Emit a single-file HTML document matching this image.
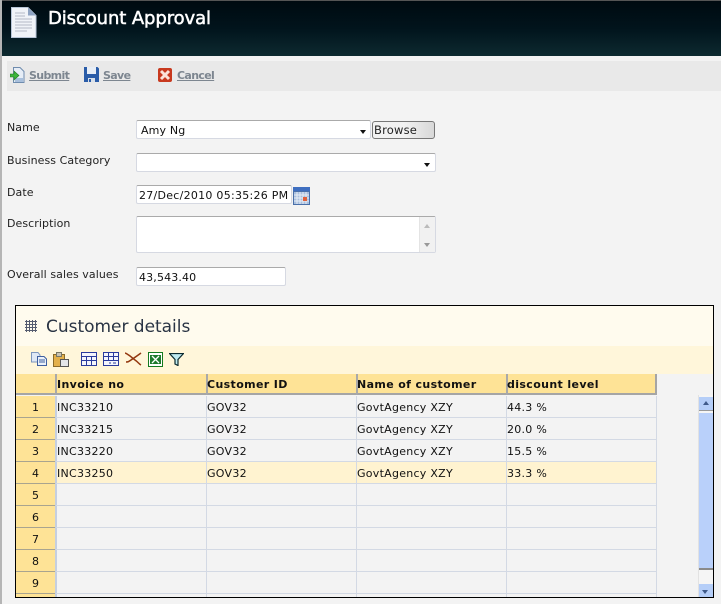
<!DOCTYPE html>
<html><head><meta charset="utf-8"><style>
*{box-sizing:border-box}
html,body{margin:0;padding:0}
body{width:721px;height:604px;overflow:hidden;background:#f3f3f3;position:relative;font-family:"DejaVu Sans","Liberation Sans",sans-serif;font-size:11px;color:#111}
.a{position:absolute;white-space:nowrap}
.l{left:7px;color:#222;font-size:11px;line-height:14px;letter-spacing:.07px;margin-top:1px}
.f{position:absolute;background:#fff;border:1px solid #d6d9e2;border-top-color:#aaa;border-radius:2px;line-height:19px;padding-left:4px;font-size:11px;white-space:nowrap}
.tb{font-weight:bold;color:#7d8690;text-decoration:underline;font-size:11px;line-height:14px;top:69px;letter-spacing:-.65px}
.r{width:39px;height:22px;background:#fee396;border-bottom:1px solid #a9a48f;text-align:center;line-height:23px;color:#111}
.h{top:374px;height:21px;background:#fee396;border-left:2px solid #a9a9a9;border-bottom:2px solid #a5a5a5;font-weight:bold;line-height:21px;padding-left:0;color:#111;font-size:11px;letter-spacing:.37px;text-indent:-1px}
.c{line-height:23px;padding-left:2px;letter-spacing:.27px}
.hl{height:1px;background:#d3d9e4;left:56px;width:601px}
.vl{width:1px;background:#d3d9e4;top:396px;height:201px}
</style></head><body>
<div class="a" style="left:0;top:0;width:2px;height:604px;background:#b5b5b5"></div>
<div class="a" style="left:2px;top:0;width:719px;height:56px;background:linear-gradient(#000a10 0,#01141c 50%,#0d2a30 100%);border-top:1px solid #555"></div>
<svg class="a" style="left:11px;top:7px" width="26" height="31" viewBox="0 0 26 31"><path d="M.5.5H17L25 8.500V30.500H.5Z" fill="#f0f3f8" stroke="#b9c6d8"/><path d="M17 .5V8.500H25Z" fill="#8ea3c2"/><path d="M4 6h10M4 9h10M4 12h17M4 15h17M4 18h17M4 21h17M4 24h12" stroke="#b4bac6"/></svg>
<div class="a" style="left:48px;top:7px;font-size:18px;line-height:24px;color:#fff;font-family:'DejaVu Sans',sans-serif;-webkit-text-stroke:.5px #fff;letter-spacing:-.1px">Discount Approval</div>

<div class="a" style="left:7px;top:61px;width:714px;height:30px;background:#e9e9e9"></div>
<svg class="a" style="left:10px;top:67px" width="15" height="16" viewBox="0 0 15 16"><path d="M3.500.5H10L14 4.500V15.500H3.500Z" fill="#e6edf6" stroke="#6f8cae"/><path d="M5 11h8v4H5z" fill="#a9c0dc"/><path d="M0 7H4V4L9 8.500 4 13V10H0Z" fill="#3cb43c" stroke="#1c7a1c" stroke-width=".6"/></svg>
<div class="a tb" style="left:29px">Submit</div>
<svg class="a" style="left:84px;top:67px" width="15" height="15" viewBox="0 0 15 15"><path d="M0 0H13.500L15 1.500V15H0Z" fill="#2a5ca8"/><path d="M3 0H12V7H3Z" fill="#e8eef6"/><path d="M4 11H11V15H4Z" fill="#d8e0ea"/><path d="M5 12h2v3H5z" fill="#2a5ca8"/></svg>
<div class="a tb" style="left:103px">Save</div>
<svg class="a" style="left:158px;top:68px" width="14" height="14" viewBox="0 0 14 14"><rect width="14" height="14" rx="2" fill="#c8391e"/><path d="M3 3L11 11M11 3L3 11" stroke="#fbe3d8" stroke-width="3"/></svg>
<div class="a tb" style="left:177px">Cancel</div>

<div class="a l" style="top:120px">Name</div>
<div class="a l" style="top:153px">Business Category</div>
<div class="a l" style="top:185px">Date</div>
<div class="a l" style="top:216px">Description</div>
<div class="a l" style="top:267px">Overall sales values</div>

<div class="f" style="left:136px;top:120px;width:235px;height:19px;letter-spacing:.15px">Amy Ng</div>
<div class="a" style="left:360px;top:130px;width:0;height:0;border:3.500px solid transparent;border-top:4px solid #111;border-bottom:0"></div>
<div class="a" style="left:372px;top:121px;width:63px;height:18px;border:1px solid #777;border-radius:3px;background:linear-gradient(90deg,#f2f2f2 50%,#d8d8d8);line-height:17px;padding-left:1px;font-size:11.500px;letter-spacing:.2px;color:#222">Browse</div>
<div class="f" style="left:136px;top:153px;width:300px;height:19px"></div>
<div class="a" style="left:424px;top:163px;width:0;height:0;border:3.500px solid transparent;border-top:4px solid #111;border-bottom:0"></div>
<div class="f" style="left:136px;top:185px;width:156px;height:19px;padding-left:2px;line-height:19px;letter-spacing:.27px">27/Dec/2010 05:35:26 PM</div>
<svg class="a" style="left:293px;top:187px" width="17" height="18" viewBox="0 0 17 18"><rect width="17" height="18" fill="#4a70aa"/><rect y="0" width="17" height="4" fill="#3f6fc0"/><path d="M1 5h15v12H1z" fill="#a9bfdd"/><path d="M1 8h15M1 11h15M1 14h15M4 5v12M7 5v12M10 5v12M13 5v12" stroke="#e6edf6"/><rect x="10" y="10" width="4" height="4" fill="#e0603c"/></svg>
<div class="f" style="left:136px;top:216px;width:300px;height:37px"></div>
<div class="a" style="left:419px;top:217px;width:16px;height:35px;background:#f1f1f1;border-left:1px solid #e4e4e4"></div>
<div class="a" style="left:424px;top:224px;width:0;height:0;border:3.500px solid transparent;border-bottom:4px solid #bbb;border-top:0"></div>
<div class="a" style="left:424px;top:243px;width:0;height:0;border:3.500px solid transparent;border-top:4px solid #999;border-bottom:0"></div>
<div class="f" style="left:136px;top:267px;width:150px;height:19px;padding-left:2px;letter-spacing:.15px">43,543.40</div>

<!-- panel -->
<div class="a" style="left:15px;top:305px;width:699px;height:293px;background:#f3f3f3;border:1px solid #000"></div>
<div class="a" style="left:16px;top:306px;width:697px;height:40px;background:#fffbee"></div>
<div class="a" style="left:16px;top:346px;width:697px;height:28px;background:#fff6da"></div>
<svg class="a" style="left:25px;top:320px" width="12" height="12" viewBox="0 0 12 12"><path d="M0 1.500h12M0 4.500h12M0 7.500h12M0 10.500h12M1.500 0v12M4.500 0v12M7.500 0v12M10.500 0v12" stroke="#555c70"/></svg>
<div class="a" style="left:46px;top:315px;font-size:17px;line-height:24px;color:#2a3444;letter-spacing:-.02px">Customer details</div>
<svg class="a" style="left:31px;top:352px" width="16" height="14" viewBox="0 0 16 14"><path d="M.5.500H7L9 3V10H.5Z" fill="#dfe8f5" stroke="#7d96bd"/><path d="M6.500 4.500H13L15.500 7V13.500H6.500Z" fill="#eaf0f9" stroke="#3e5fa0"/><path d="M8 8h6M8 10h6" stroke="#3e5fa0"/></svg>
<svg class="a" style="left:53px;top:352px" width="16" height="15" viewBox="0 0 16 15"><rect x=".5" y="2.500" width="11" height="12" fill="#e3b04b" stroke="#8a6a28"/><rect x="3.500" y=".5" width="5" height="4" fill="#c9c4b4" stroke="#776"/><path d="M7.500 7.500H15.500V14.500H7.500Z" fill="#e4e6ea" stroke="#555"/></svg>
<svg class="a" style="left:81px;top:352px" width="16" height="14" viewBox="0 0 16 14"><rect x=".5" y=".5" width="15" height="13" fill="#f4f5fc" stroke="#2a3a9c"/><path d="M0 4.500h16M0 8.500h16M5.500 4v10M10.500 4v10" stroke="#2a3a9c"/></svg>
<svg class="a" style="left:103px;top:352px" width="16" height="14" viewBox="0 0 16 14"><rect x=".5" y=".5" width="15" height="13" fill="#f4f5fc" stroke="#2a3a9c"/><path d="M0 4.500h16M0 8.500h16M5.500 0v9M10.500 0v9M6 11h2M10 11h3" stroke="#2a3a9c"/></svg>
<svg class="a" style="left:125px;top:352px" width="17" height="14" viewBox="0 0 17 14"><path d="M0 1C5 3 7 6 10 8S14 12 16 13M16 1C12 4 9 6 6 8S3 10 1 10" fill="none" stroke="#93380f" stroke-width="1.500"/></svg>
<svg class="a" style="left:148px;top:352px" width="15" height="15" viewBox="0 0 15 15"><rect x=".5" y=".5" width="14" height="14" fill="#fff" stroke="#157a1f"/><rect x="2" y="3" width="11" height="9" fill="#1f7a2c"/><path d="M4 4L11 11M11 4L4 11" stroke="#fff" stroke-width="1.300"/></svg>
<svg class="a" style="left:169px;top:353px" width="15" height="13" viewBox="0 0 15 13"><path d="M.5.5H14.500L9 6.500V12.500L6 11V6.500Z" fill="#bfeaf0" stroke="#0b2a30" stroke-width="1.200"/></svg>

<!-- grid header -->
<div class="a" style="left:16px;top:374px;width:39px;height:21px;background:#fee396;border-bottom:2px solid #a5a5a5"></div>
<div class="a h" style="left:55px;width:151px;text-indent:0">Invoice no</div>
<div class="a h" style="left:206px;width:150px">Customer ID</div>
<div class="a h" style="left:356px;width:150px">Name of customer</div>
<div class="a h" style="left:506px;width:151px;border-right:2px solid #a5a5a5">discount level</div>

<!-- row header -->
<div class="a" style="left:16px;top:396px;width:39px;height:201px;background:#fee396"></div>
<div class="a" style="left:55px;top:396px;width:2px;height:201px;background:#c5cfe0"></div>
<div class="a r" style="left:16px;top:396px">1</div>
<div class="a r" style="left:16px;top:418px">2</div>
<div class="a r" style="left:16px;top:440px">3</div>
<div class="a r" style="left:16px;top:462px">4</div>
<div class="a r" style="left:16px;top:484px">5</div>
<div class="a r" style="left:16px;top:506px">6</div>
<div class="a r" style="left:16px;top:528px">7</div>
<div class="a r" style="left:16px;top:550px">8</div>
<div class="a r" style="left:16px;top:572px">9</div>

<div class="a" style="left:57px;top:462px;width:600px;height:22px;background:#fff3d0"></div>
<div class="a hl" style="top:417px"></div><div class="a hl" style="top:439px"></div><div class="a hl" style="top:461px"></div><div class="a hl" style="top:483px"></div><div class="a hl" style="top:505px"></div><div class="a hl" style="top:527px"></div><div class="a hl" style="top:549px"></div><div class="a hl" style="top:571px"></div><div class="a hl" style="top:593px"></div>
<div class="a vl" style="left:206px"></div><div class="a vl" style="left:356px"></div><div class="a vl" style="left:506px"></div><div class="a vl" style="left:656px"></div>

<div class="a c" style="left:55px;top:396px">INC33210</div><div class="a c" style="left:205px;top:396px">GOV32</div><div class="a c" style="left:355px;top:396px">GovtAgency XZY</div><div class="a c" style="left:505px;top:396px">44.3 %</div>
<div class="a c" style="left:55px;top:418px">INC33215</div><div class="a c" style="left:205px;top:418px">GOV32</div><div class="a c" style="left:355px;top:418px">GovtAgency XZY</div><div class="a c" style="left:505px;top:418px">20.0 %</div>
<div class="a c" style="left:55px;top:440px">INC33220</div><div class="a c" style="left:205px;top:440px">GOV32</div><div class="a c" style="left:355px;top:440px">GovtAgency XZY</div><div class="a c" style="left:505px;top:440px">15.5 %</div>
<div class="a c" style="left:55px;top:462px">INC33250</div><div class="a c" style="left:205px;top:462px">GOV32</div><div class="a c" style="left:355px;top:462px">GovtAgency XZY</div><div class="a c" style="left:505px;top:462px">33.3 %</div>

<!-- scrollbar -->
<div class="a" style="left:698px;top:395px;width:15px;height:202px;background:#f5f5f5;border-left:1px solid #e2e2e2"></div>
<div class="a" style="left:699px;top:397px;width:14px;height:14px;background:#b5cef8;border-bottom:1px solid #999"></div>
<div class="a" style="left:703px;top:401px;width:0;height:0;border:3.500px solid transparent;border-bottom:4px solid #3f5a8a;border-top:0"></div>
<div class="a" style="left:699px;top:413px;width:14px;height:157px;background:#b9d0fa;border-bottom:2px solid #8a8a8a"></div>
<div class="a" style="left:699px;top:584px;width:14px;height:13px;background:#b5cef8"></div>
<div class="a" style="left:702px;top:590px;width:0;height:0;border:3.500px solid transparent;border-top:4px solid #3f5a8a;border-bottom:0"></div>
</body></html>
